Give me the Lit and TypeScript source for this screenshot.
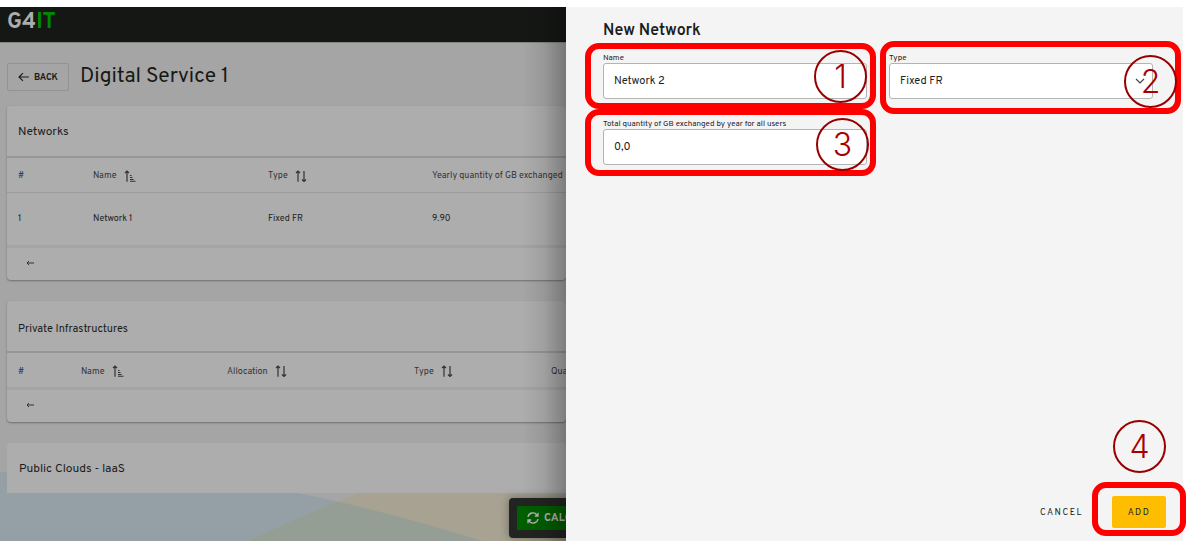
import { LitElement, html, css, svg, nothing } from "lit";
import { customElement, property } from "lit/decorators.js";
import { classMap } from "lit/directives/class-map.js";

type Sort = "asc" | "none" | null;
interface Column { label: string; width: string; sort: Sort; }
interface Section { title: string; compact: boolean; columns: Column[]; rows: string[][]; }

const SECTIONS: Section[] = [
  {
    title: "Networks",
    compact: false,
    columns: [
      { label: "#", width: "75px", sort: null },
      { label: "Name", width: "175px", sort: "asc" },
      { label: "Type", width: "164px", sort: "none" },
      { label: "Yearly quantity of GB exchanged", width: "auto", sort: null },
    ],
    rows: [["1", "Network 1", "Fixed FR", "9.90"]],
  },
  {
    title: "Private Infrastructures",
    compact: true,
    columns: [
      { label: "#", width: "63px", sort: null },
      { label: "Name", width: "146px", sort: "asc" },
      { label: "Allocation", width: "187px", sort: "none" },
      { label: "Type", width: "137px", sort: "none" },
      { label: "Quantity", width: "auto", sort: null },
    ],
    rows: [],
  },
];

const sortIcon = (sort: Sort) => {
  if (sort === null) return nothing;
  const bars = svg`<path d="M6 5.5h1.5M6 7.5h2.5M6 9.5h3.5M6 11.3h5.5" stroke-width="1.1" />`;
  const down = svg`<path d="M9 1v10.5M7 9.5l2 2 2-2" />`;
  return html`<svg class="sort" viewBox="0 0 12 12" width="12" height="12" aria-hidden="true">
    <path d="M3 11.8V1M1 3l2-2 2 2" />${sort === "asc" ? bars : down}
  </svg>`;
};

@customElement("data-card")
class DataCard extends LitElement {
  @property({ attribute: false }) section!: Section;

  static styles = css`
    :host { display: block; background: #adadad; border-radius: 4px; box-shadow: 0 1px 2px #6f6f6f; }
    * { box-sizing: border-box; }
    h2 { height: 52px; margin: 0; padding: 2px 11px 0; font-size: 12px; line-height: 48px; font-weight: 400; color: #1c1c1c; border-bottom: 2px solid #969696; }
    h2.compact { padding-top: 4px; font-size: 11px; }
    table { width: 100%; table-layout: fixed; border-collapse: collapse; font-size: 9px; color: #222; }
    th, td { padding: 0 0 0 11px; text-align: left; white-space: nowrap; font-weight: 400; }
    th { height: 34px; padding-top: 2px; color: #333; }
    td { height: 53px; border-top: 1px solid #9c9c9c; }
    .head { display: inline-flex; align-items: center; gap: 7px; padding: 0; border: 0; background: none; font: inherit; color: inherit; }
    .sort { fill: none; stroke: #333; stroke-width: 1.2; }
    .pager { height: 35px; padding: 0 19px 3px; display: flex; align-items: center; border-top: 3px solid #a4a4a4; }
    .pager button { display: flex; padding: 0; border: 0; background: none; }
    .pager svg { fill: none; stroke: #333; stroke-width: 1; }
  `;

  render() {
    const { title, compact, columns, rows } = this.section;
    return html`
      <h2 class=${classMap({ compact })}>${title}</h2>
      <table aria-label=${title}>
        <colgroup>${columns.map((c) => html`<col style="width:${c.width}" />`)}</colgroup>
        <thead>
          <tr>${columns.map((c) => html`<th scope="col">${c.sort
            ? html`<button class="head">${c.label}${sortIcon(c.sort)}</button>` : c.label}</th>`)}</tr>
        </thead>
        <tbody>${rows.map((r) => html`<tr>${r.map((v) => html`<td>${v}</td>`)}</tr>`)}</tbody>
      </table>
      <div class="pager">
        <button aria-label="Previous page">
          <svg viewBox="0 0 8 6" width="8" height="6"><path d="M8 3H1M3 1L1 3l2 2" /></svg>
        </button>
      </div>`;
  }
}

@customElement("app-root")
class AppRoot extends LitElement {
  static styles = css`
    :host { display: block; padding: 7px 21px 5px 0; background: #fff; font-family: Overpass, Roboto, "Liberation Sans", sans-serif; }
    * { box-sizing: border-box; }
    button { font-family: inherit; }
    .frame { display: grid; grid-template-columns: minmax(0, 566fr) minmax(0, 617fr); min-height: calc(100vh - 12px); }

    .page { position: relative; isolation: isolate; overflow: hidden; background: #a5a5a5; }
    .page::after { content: ""; position: absolute; inset: 0 0 0 auto; width: 44px; background: linear-gradient(to right, rgba(0,0,0,0), rgba(0,0,0,.08) 50%, rgba(0,0,0,.28)); pointer-events: none; }
    .waves { position: absolute; left: 0; bottom: 0; width: 100%; height: 69px; z-index: -1; }
    .topbar { height: 36px; padding: 2px 7px 0; background: #151715; border-bottom: 1px solid #858585; font-size: 22px; line-height: 27px; font-weight: 700; color: #adadad; }
    .topbar span { color: #008a00; }
    .heading { display: flex; align-items: center; gap: 11px; padding: 20px 7px 15px; }
    .heading h1 { margin: 0; font-size: 21px; line-height: 28px; font-weight: 400; color: #161816; }
    .back { display: flex; align-items: center; gap: 5px; width: 62px; height: 28px; padding: 0 10px; border: 1px solid #929292; border-radius: 2px; background: none; font-size: 9px; font-weight: 700; color: #1c1e1c; }
    .back svg { fill: none; stroke: #1c1e1c; stroke-width: 1.2; }
    .cards { display: flex; flex-direction: column; gap: 21px; padding-left: 7px; }
    .plain { margin: 0; padding: 2px 12px 0; background: #adadad; border-radius: 4px 4px 0 0; font-size: 12px; line-height: 48px; font-weight: 400; color: #1c1c1c; }
    .actions { position: absolute; right: -90px; bottom: 3px; width: 147px; padding: 8px; border-radius: 4px; background: #222422; box-shadow: 0 0 10px rgba(0,0,0,.35); }
    .calc { display: flex; align-items: center; gap: 5px; width: 100%; height: 24px; padding: 0 10px; border: 0; background: #005f00; color: #b4b4b4; font-size: 11px; font-weight: 700; }
    .calc svg { flex: none; fill: none; stroke: #b4b4b4; stroke-width: 1.3; }

    .drawer { display: flex; flex-direction: column; background: #f4f4f4; color: #222; }
    .drawer h2 { margin: 14px 37px 12px; font-size: 16px; line-height: 20px; font-weight: 600; color: #1c1c1c; }
    .fields { display: grid; grid-template-columns: 1fr 1fr; gap: 20px 22px; padding: 0 30px 0 37px; }
    .field { position: relative; display: flex; flex-direction: column; }
    .field label { font-size: 8px; line-height: 10px; color: #222; white-space: nowrap; }
    .field input, .field select { appearance: none; width: 100%; height: 36px; margin: 0; padding: 0 10px; border: 1px solid #b4b4b4; border-radius: 3px; background: #fff; font: 11px Overpass, Roboto, "Liberation Sans", sans-serif; color: #222; outline: 0; }
    .chevron { position: absolute; right: 8px; bottom: 15px; fill: none; stroke: #444; stroke-width: 1.2; }
    .footer { display: flex; justify-content: flex-end; align-items: center; gap: 29px; margin-top: auto; padding: 0 17px 13px; }
    .footer button { height: 32px; border: 0; font-size: 9px; letter-spacing: 1.5px; color: #222; }
    .cancel { padding: 0; background: none; }
    .add-wrap { position: relative; }
    .add { width: 54px; padding: 0; background: #ffbd00; border-radius: 2px; }

    .mark { position: absolute; border: 6px solid #f00; border-radius: 14px; pointer-events: none; }
    .mark-name { inset: -10px -9px -10px -18px; }
    .mark-type { inset: -12px -28px -15px -9px; }
    .mark-qty { inset: -10px -9px -11px -18px; }
    .mark-add { inset: -14px -20px -8px; }
    .step { position: absolute; width: 53px; height: 53px; border: 2px solid #980000; border-radius: 50%; text-align: center; font: 300 32px/49px Inter, "Noto Sans", sans-serif; color: #a80000; pointer-events: none; }
    .step-name { right: 0; top: -3px; }
    .step-type { right: -24px; top: 2px; }
    .step-qty { right: -2px; top: -1px; }
    .step-add { right: 0; bottom: 55px; }
  `;

  render() {
    return html`
      <div class="frame">
        <main class="page">
          <svg class="waves" viewBox="0 0 566 69" preserveAspectRatio="none" aria-hidden="true">
            <defs><clipPath id="hill"><path d="M0 0H150Q300 12 482 69H0Z" /></clipPath></defs>
            <path fill="#95a0a6" d="M0 0H150Q300 12 482 69H0Z" />
            <path fill="#a7a292" d="M248 69L300 45L362 20L420 0H566V69Z" />
            <path fill="#949e95" clip-path="url(#hill)" d="M248 69L300 45L362 20L420 0H566V69Z" />
          </svg>
          <header class="topbar">G4<span>IT</span></header>
          <div class="heading">
            <button class="back">
              <svg viewBox="0 0 11 10" width="11" height="10" aria-hidden="true"><path d="M11 5H1M5 1L1 5l4 4" /></svg>BACK
            </button>
            <h1>Digital Service 1</h1>
          </div>
          <div class="cards">
            ${SECTIONS.map((s) => html`<data-card .section=${s}></data-card>`)}
            <h2 class="plain">Public Clouds - IaaS</h2>
          </div>
          <div class="actions">
            <button class="calc">
              <svg viewBox="0 0 12 12" width="12" height="12" aria-hidden="true">
                <path d="M1 5a5 5 0 0 1 9-2l1 1M11 .8V4H7.8M11 7a5 5 0 0 1-9 2L1 8M1 11.2V8h3.2" />
              </svg>CALCULATE
            </button>
          </div>
        </main>

        <aside class="drawer" aria-label="New Network">
          <h2>New Network</h2>
          <div class="fields">
            <div class="field">
              <label for="name">Name</label>
              <input id="name" type="text" .value=${"Network 2"} />
              <div class="mark mark-name"></div>
              <div class="step step-name">1</div>
            </div>
            <div class="field">
              <label for="type">Type</label>
              <select id="type"><option selected>Fixed FR</option></select>
              <svg class="chevron" viewBox="0 0 10 6" width="10" height="6" aria-hidden="true"><path d="M1 1l4 4 4-4" /></svg>
              <div class="mark mark-type"></div>
              <div class="step step-type">2</div>
            </div>
            <div class="field">
              <label for="qty">Total quantity of GB exchanged by year for all users</label>
              <input id="qty" type="text" inputmode="decimal" .value=${"0,0"} />
              <div class="mark mark-qty"></div>
              <div class="step step-qty">3</div>
            </div>
          </div>
          <div class="footer">
            <button class="cancel">CANCEL</button>
            <div class="add-wrap">
              <button class="add">ADD</button>
              <div class="mark mark-add"></div>
              <div class="step step-add">4</div>
            </div>
          </div>
        </aside>
      </div>`;
  }
}
